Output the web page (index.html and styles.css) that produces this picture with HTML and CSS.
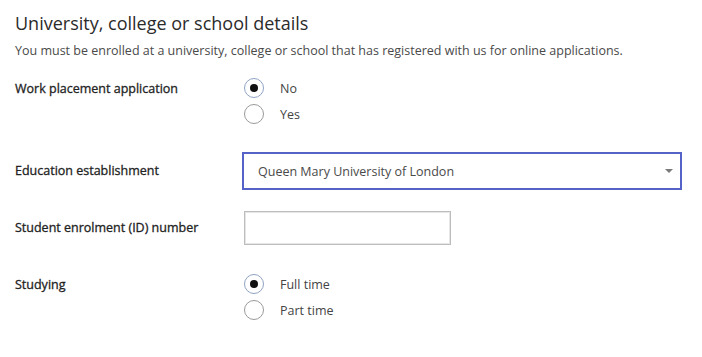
FILE: index.html
```html
<!DOCTYPE html>
<html lang="en">
<head>
<meta charset="utf-8">
<title>University, college or school details</title>
<link rel="stylesheet" href="styles.css">
</head>
<body>
<section class="panel">
  <h2 class="title">University, college or school details</h2>
  <p class="intro">You must be enrolled at a university, college or school that has registered with us for online applications.</p>

  <div class="row row-work">
    <div class="label">Work placement application</div>
    <div class="control radios">
      <label class="radio"><span class="dot checked focus"></span><span class="rtext">No</span></label>
      <label class="radio"><span class="dot"></span><span class="rtext">Yes</span></label>
    </div>
  </div>

  <div class="row row-edu">
    <div class="label">Education establishment</div>
    <div class="control">
      <div class="select"><span class="select-text">Queen Mary University of London</span><span class="caret"></span></div>
    </div>
  </div>

  <div class="row row-id">
    <div class="label">Student enrolment (ID) number</div>
    <div class="control">
      <div class="input"></div>
    </div>
  </div>

  <div class="row row-study">
    <div class="label">Studying</div>
    <div class="control radios">
      <label class="radio"><span class="dot checked focus"></span><span class="rtext">Full time</span></label>
      <label class="radio"><span class="dot"></span><span class="rtext">Part time</span></label>
    </div>
  </div>
</section>
</body>
</html>
```

FILE: styles.css
```css
html, body {
  margin: 0;
  padding: 0;
  background: #ffffff;
}
body {
  font-family: "Open Sans", "Liberation Sans", sans-serif;
  color: #333333;
}
.panel {
  padding: 11px 0 0 15px;
}
.title {
  margin: 0 0 7px 0;
  font-size: 18px;
  line-height: 24px;
  font-weight: 400;
  color: #2b2b2b;
}
.intro {
  margin: 0;
  font-size: 12.5px;
  line-height: 18px;
  color: #4a4a4a;
}
.row {
  display: flex;
  align-items: flex-start;
}
.label {
  width: 229px;
  flex: none;
  font-size: 12.5px;
  font-weight: 400;
  color: #222222;
  -webkit-text-stroke: 0.3px #222222;
}
.row-work { margin-top: 15px; }
.row-work .label, .row-study .label { line-height: 27px; }
.radios {
  display: flex;
  flex-direction: column;
}
.radio {
  display: flex;
  align-items: center;
  height: 26px;
}
.dot {
  width: 20px;
  height: 20px;
  box-sizing: border-box;
  border: 1px solid #9a9a9a;
  border-radius: 50%;
  background: #fff;
  position: relative;
  flex: none;
}
.dot.focus {
  border-color: #8fa3c4;
}
.dot.checked::after {
  content: "";
  position: absolute;
  left: 5px;
  top: 5px;
  width: 8px;
  height: 8px;
  border-radius: 50%;
  background: #111;
}
.rtext {
  margin-left: 16px;
  font-size: 12.5px;
  color: #444;
}
.row-edu { margin-top: 25px; }
.row-edu .label { line-height: 37px; }
.select {
  margin-left: -2px;
  width: 440px;
  height: 38px;
  box-sizing: border-box;
  border: 2px solid #5563c8;
  display: flex;
  align-items: center;
  justify-content: space-between;
  padding: 0 7px 0 14px;
}
.select-text {
  font-size: 12.5px;
  color: #4a4a4a;
}
.caret {
  width: 0;
  height: 0;
  border-left: 4px solid transparent;
  border-right: 4px solid transparent;
  border-top: 4px solid #7a7a7a;
}
.row-id { margin-top: 21px; }
.row-id .label { line-height: 34px; }
.input {
  width: 207px;
  height: 34px;
  box-sizing: border-box;
  border: 1px solid #bdbdbd;
  box-shadow: inset 0 0 0 1px #e6e6e6;
}
.row-study { margin-top: 26px; }
```
